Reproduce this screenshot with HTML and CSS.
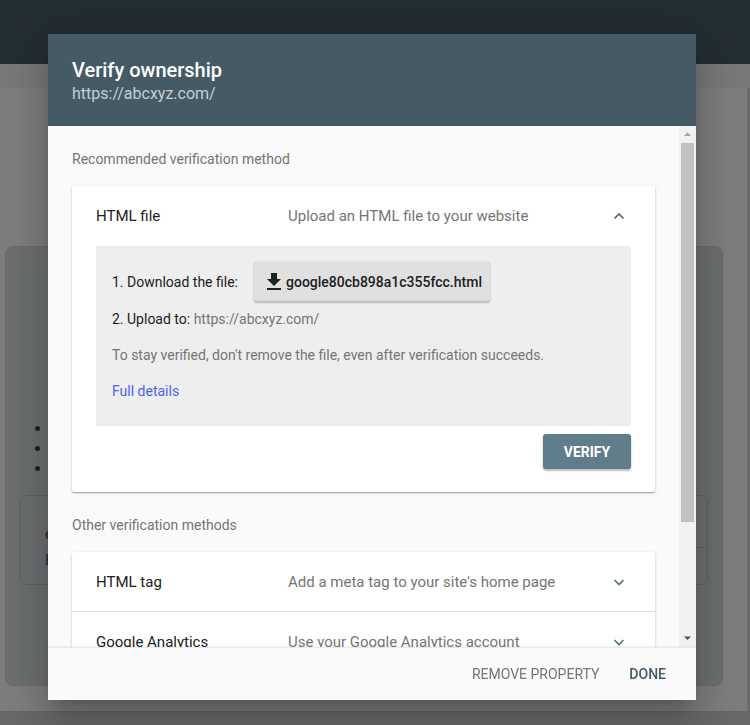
FILE: index.html
```html
<!DOCTYPE html>
<html lang="en">
<head>
<meta charset="utf-8">
<title>Verify ownership</title>
<link rel="stylesheet" href="styles.css">
</head>
<body>
<div class="page">
  <header class="appbar"></header>
  <div class="band"></div>
  <main class="panel">
    <section class="bgcard">
      <div class="dots">
        <div class="dot-row"><span class="dot"></span></div>
        <div class="dot-row"><span class="dot"></span></div>
        <div class="dot-row"><span class="dot"></span></div>
      </div>
      <div class="bgbox">
        <div class="bgbox-row">e</div>
        <div class="bgbox-row link">E</div>
      </div>
    </section>
  </main>
  <div class="bottom"></div>
</div>

<div class="scrim"></div>

<div class="dialog">
  <div class="dlg-head">
    <div class="dlg-title">Verify ownership</div>
    <div class="dlg-sub">https://abcxyz.com/</div>
  </div>
  <div class="dlg-body">
    <div class="dlg-content">
      <div class="sec-title first">Recommended verification method</div>
      <div class="card">
        <div class="card-head">
          <div class="m-label">HTML file</div>
          <div class="m-desc">Upload an HTML file to your website</div>
          <svg class="chev" viewBox="0 0 24 24" width="24" height="24"><polyline points="7.5,14.5 12,10 16.5,14.5" fill="none" stroke="#58646c" stroke-width="1.6"/></svg>
        </div>
        <div class="card-body">
          <div class="steps">
            <div class="step1">
              <span class="step-label">1. Download the file:</span>
              <button class="dl-btn">
                <svg viewBox="0 0 24 24" width="24" height="24"><path d="M19 9h-4V3H9v6H5l7 7 7-7zM5 18v2h14v-2H5z" fill="#212121"/></svg>
                <span>google80cb898a1c355fcc.html</span>
              </button>
            </div>
            <div class="step2">2. Upload to: <span class="muted">https://abcxyz.com/</span></div>
            <div class="note">To stay verified, don't remove the file, even after verification succeeds.</div>
            <div class="details"><a class="link-blue">Full details</a></div>
          </div>
          <div class="actions"><button class="verify">VERIFY</button></div>
        </div>
      </div>

      <div class="sec-title">Other verification methods</div>
      <div class="card list">
        <div class="card-head row">
          <div class="m-label">HTML tag</div>
          <div class="m-desc">Add a meta tag to your site's home page</div>
          <svg class="chev" viewBox="0 0 24 24" width="24" height="24"><polyline points="7.5,10 12,14.5 16.5,10" fill="none" stroke="#546e7a" stroke-width="1.6"/></svg>
        </div>
        <div class="card-head row">
          <div class="m-label">Google Analytics</div>
          <div class="m-desc">Use your Google Analytics account</div>
          <svg class="chev" viewBox="0 0 24 24" width="24" height="24"><polyline points="7.5,10 12,14.5 16.5,10" fill="none" stroke="#546e7a" stroke-width="1.6"/></svg>
        </div>
      </div>
    </div>
    <div class="scrollbar">
      <div class="sb-btn"><svg viewBox="0 0 17 17" width="17" height="17"><polygon points="5,10 12,10 8.5,6.5" fill="#a3a3a3"/></svg></div>
      <div class="sb-thumb"></div>
      <div class="sb-track"></div>
      <div class="sb-btn"><svg viewBox="0 0 17 17" width="17" height="17"><polygon points="5,6.5 12,6.5 8.5,10" fill="#505050"/></svg></div>
    </div>
  </div>
  <div class="dlg-foot">
    <button class="flat grey">REMOVE PROPERTY</button>
    <button class="flat dark">DONE</button>
  </div>
</div>
</body>
</html>
```

FILE: styles.css
```css
* { box-sizing: border-box; }
html, body { margin: 0; padding: 0; }
body {
  width: 750px;
  height: 725px;
  overflow: hidden;
  background: #d2d2d2;
  font-family: Roboto, "Noto Sans", Arial, sans-serif;
}

/* underlying page */
.page { display: flex; flex-direction: column; height: 725px; }
.appbar { height: 64px; background: #455a66; flex: none; }
.band { height: 24px; background: #f0f0f0; flex: none; }
.panel {
  height: 624px;
  width: 748px;
  background: #fbfbfb;
  border-right: 1px solid #e0e0e0;
  border-bottom: 1px solid #c8c8c8;
  padding-top: 158px;
  flex: none;
}
.bgcard {
  margin-left: 5px;
  width: 718px;
  height: 440px;
  background: #d8dde0;
  border: 1px solid #d0d4d6;
  border-radius: 8px;
  padding: 171px 14px 0 14px;
}
.dots { display: flex; flex-direction: column; }
.dot-row { height: 20px; display: flex; align-items: center; padding-left: 15px; }
.dot { width: 5px; height: 5px; border-radius: 50%; background: #3c4043; }
.bgbox {
  margin-top: 17px;
  height: 90px;
  border: 1px solid #c4c4c4;
  border-radius: 6px;
  padding: 26px 0 0 24px;
  font-size: 14px;
  color: #444;
}
.bgbox-row { height: 26px; border-bottom: 1px solid #c4c4c4; line-height: 24px; }
.bgbox-row.link { border-bottom: none; color: #3a4a9a; }
.bottom { flex: 1; background: #d0d0d0; }

.scrim {
  position: fixed;
  inset: 0;
  background: rgba(0, 0, 0, 0.5);
}

/* dialog */
.dialog {
  position: fixed;
  left: 48px;
  top: 34px;
  width: 648px;
  height: 666px;
  display: flex;
  flex-direction: column;
  background: #fafafa;
  box-shadow: 0 11px 15px -7px rgba(0,0,0,.2), 0 24px 38px 3px rgba(0,0,0,.14), 0 9px 46px 8px rgba(0,0,0,.12);
}
.dlg-head {
  height: 92px;
  flex: none;
  background: #455a64;
  padding: 24px 24px 0 24px;
}
.dlg-title { font-size: 20px; font-weight: 500; line-height: 24px; color: #ffffff; }
.dlg-sub { font-size: 16px; line-height: 20px; color: #c5ced3; margin-top: 2px; }

.dlg-body { flex: 1; display: flex; min-height: 0; }
.dlg-content {
  flex: 1;
  overflow: hidden;
  background: #fafafa;
  padding: 0 24px;
}
.sec-title { font-size: 14px; line-height: 20px; color: #757575; margin: 23px 0 17px; }
.sec-title.first { margin: 23px 0 17px; }

.card {
  background: #ffffff;
  border-radius: 2px;
  box-shadow: 0 1px 3px rgba(0,0,0,.2), 0 1px 1px rgba(0,0,0,.14), 0 2px 1px -1px rgba(0,0,0,.12);
}
.card-head {
  height: 60px;
  display: flex;
  align-items: center;
  padding: 0 24px;
}
.card-head.row { height: 60px; border-bottom: 1px solid #e0e0e0; }
.m-label { width: 192px; font-size: 15px; color: #212121; flex: none; }
.m-desc { flex: 1; font-size: 15px; color: #757575; }
.chev { flex: none; display: block; }

.card-body { padding: 0 24px 23px; }
.steps {
  background: #eeeeee;
  padding: 16px 16px 25px;
  font-size: 14px;
  line-height: 20px;
  color: #212121;
}
.step1 { display: flex; align-items: center; }
.step-label { width: 142px; }
.dl-btn {
  height: 39px;
  display: flex;
  align-items: center;
  padding: 0 8px;
  border: none;
  border-radius: 2px;
  background: #e0e0e0;
  box-shadow: 0 2px 2px rgba(0,0,0,.2), 0 0 2px rgba(0,0,0,.12);
  font-family: inherit;
  font-size: 14px;
  font-weight: 500;
  color: #212121;
}
.dl-btn svg { display: block; }
.step2 { margin-top: 8px; }
.muted { color: #757575; }
.note { margin-top: 16px; color: #757575; }
.details { margin-top: 16px; }
.link-blue { color: #4a63f2; }
.actions { display: flex; justify-content: flex-end; margin-top: 8px; }
.verify {
  width: 88px;
  height: 35px;
  border: none;
  border-radius: 3px;
  background: #607d8b;
  color: #ffffff;
  font-family: inherit;
  font-size: 14px;
  font-weight: 700;
  box-shadow: 0 2px 2px rgba(0,0,0,.24), 0 0 2px rgba(0,0,0,.12);
}

/* scrollbar */
.scrollbar {
  width: 17px;
  flex: none;
  background: #f1f1f1;
  display: flex;
  flex-direction: column;
}
.sb-btn { height: 17px; flex: none; }
.sb-btn svg { display: block; }
.sb-thumb { height: 379px; margin: 0 2px; background: #c1c1c1; flex: none; }
.sb-track { flex: 1; }

/* footer */
.dlg-foot {
  height: 53px;
  flex: none;
  display: flex;
  justify-content: flex-end;
  align-items: center;
  gap: 14px;
  padding-right: 22px;
  background: #fafafa;
  border-top: 1px solid #e8e8e8;
  box-shadow: 0 -1px 2px rgba(0,0,0,.05);
}
.flat {
  border: none;
  background: transparent;
  font-family: inherit;
  font-size: 14px;
  padding: 0 8px;
  height: 36px;
}
.flat.grey { color: #757575; }
.flat.dark { color: #455a64; font-weight: 500; }
```
